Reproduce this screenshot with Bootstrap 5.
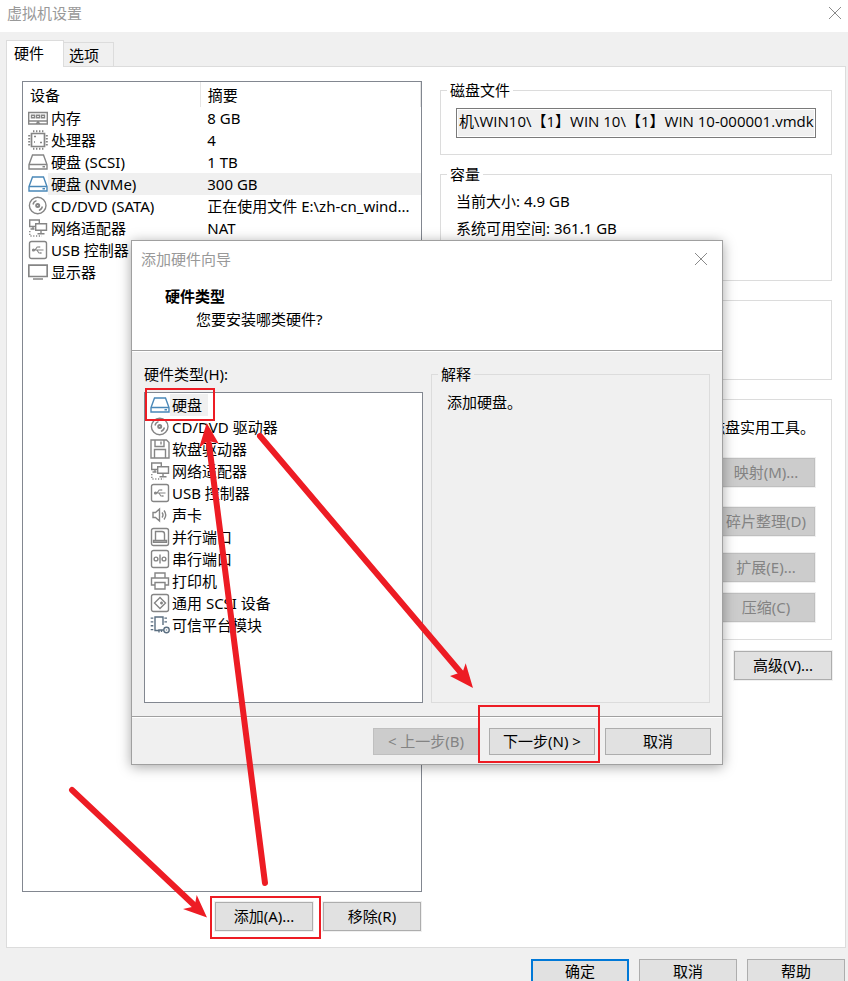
<!DOCTYPE html>
<html lang="zh-CN">
<head>
<meta charset="utf-8">
<meta name="viewport" content="width=device-width, initial-scale=1">
<title>虚拟机设置</title>
<link href="https://cdn.jsdelivr.net/npm/bootstrap@5.3.0/dist/css/bootstrap.min.css" rel="stylesheet">
<style>
body{font:15px/22px "Noto Sans","Noto Sans CJK SC",sans-serif;color:#000;background:#f0f0f0}
.titlebar{height:32px;padding:0 7px 6px;color:#999;background:#fff}
.close-x{border:0;background:none;padding:0;line-height:0;color:#8a8a8a}
.tabs{padding:8px 0 0 6px}
.tabs button{border:1px solid #dcdcdc;border-bottom:0;background:#f0f0f0;color:#000;padding:0 0 0 5px;height:24px;width:51px;line-height:22px;text-align:left}
.tabs button.active{background:#fff;height:27px;width:58px;margin-bottom:-1px;margin-right:-1px;padding:0 0 2px 7px;z-index:1}
.panel{background:#fff;border:1px solid #dcdcdc;margin:0 2px 0 6px;padding:14px 13px 16px 15px;display:grid;grid-template-columns:400fr 392fr;column-gap:18px}
.sunken{border:1px solid #828790;background:#fff}
.devices{width:100%;table-layout:fixed;line-height:22px}
.devices th{font-weight:400;height:25px;padding:0 0 0 7px;border-right:1px solid #e5e5e5}
.devices td{padding:0;white-space:nowrap;overflow:hidden;text-overflow:ellipsis}
.devices td + td{padding:0 4px 0 7px}
.devices td:first-child{padding-left:5px}
.devices .sel td + td,.devices .sel .nm{background:#f0f0f0}
.nm{padding-left:3px}
.ico{width:20px;height:20px;flex:none;fill:none;stroke:#858585;stroke-width:1.4}
.blue{stroke:#4a88b8}
.slate{stroke:#5a6e80}
.wbtn{width:98px;height:29px;padding:0 0 2px;font:inherit;line-height:20px;text-align:center;color:#000;background:#e1e1e1;border:1px solid #adadad;box-shadow:0 0 0 1px #f0f0f0;border-radius:0}
.wbtn:disabled{color:#838383;background:#ccc;border-color:#bfbfbf}
.wbtn.primary{border:2px solid #0078d7}
.list-actions{gap:10px;margin-top:10px;padding-right:1px}
fieldset.box{border:1px solid #dcdcdc;padding:0 15px}
fieldset.box legend{float:none;width:auto;margin:0 0 0 -9px;padding:0 3px;font-size:15px;line-height:18px}
.g-file{height:74px;margin-bottom:10px}
.g-cap{height:116px;margin-bottom:19px;line-height:27px}
.g-cap div:first-of-type{padding-top:5px}
.g-info{height:80px;margin-bottom:19px}
.g-tool{height:241px;margin-bottom:11px}
.path{width:100%;height:30px;margin-top:9px;padding:0 0 6px 2px;border:1px solid #7a7a7a;box-shadow:inset 0 0 0 1px #fff;background:#f0f0f0;border-radius:0;color:#000;font-family:"Open Sans","Noto Sans CJK SC",sans-serif}
.tool-note{padding:16px 1px 20px 0}
.tools{padding-right:1px}
.tools .wbtn{margin-bottom:20px}
.tools .wbtn:nth-child(2){margin-bottom:17px}
.tools .wbtn:nth-child(3){margin-bottom:11px}
.foot{flex:0 0 33px;min-height:0;padding:11px 3px 0 0;gap:10px}
.foot .wbtn{flex:none;line-height:16px;padding:0 0 5px}
.wizard{position:absolute;left:131px;top:240px;width:592px;border:1px solid #a0a0a0;background:#f0f0f0;box-shadow:0 2px 12px rgba(0,0,0,.35)}
.wiz-head{height:110px;background:#fff;border-bottom:1px solid #a0a0a0;padding:7px 15px 0 9px}
.wiz-head .cap{color:#999}
.wiz-head h1{font-size:15px;line-height:22px;font-weight:700;margin:15px 0 0 24px}
.wiz-head p{margin:1px 0 0 55px;line-height:22px}
.wiz-body{padding:13px 12px 13px 12px;border-top:1px solid #fff;display:grid;grid-template-columns:1fr 1fr;column-gap:8px}
.kinds-label{line-height:18px;margin-bottom:9px}
.kinds{height:311px;padding-top:1px}
.kinds button{display:flex;align-items:center;width:100%;height:22px;padding:0 0 0 5px;border:0;background:none;color:#000;text-align:left}
.kinds span{padding:0 6px 0 2px;line-height:22px}
.kinds .sel span{background:#f0f0f0}
.wiz-foot{border-top:1px solid #a0a0a0;box-shadow:inset 0 1px #fff;padding:11px 11px 9px;gap:10px}
.wiz-foot .wbtn{width:106px;height:27px}
.marks{position:absolute;left:0;top:0;width:848px;height:981px;pointer-events:none;fill:none;stroke:#ed1c24}
</style>
</head>
<body>
<svg class="d-none" aria-hidden="true">
<symbol id="i-disk" viewBox="0 0 20 20"><path d="M4.500 3h11L19 12.500V17H1v-4.500zM1 12.500h18M14.500 14.800h2.500"/></symbol>
<symbol id="i-mem" viewBox="0 0 20 20"><path d="M.7 4.500h18.600v11.500H.7zM1 13h18M3.500 7.200h3v2.600h-3zM8.500 7.200h3v2.600h-3zM13.500 7.200h3v2.600h-3zM8 16l2-2 2 2"/></symbol>
<symbol id="i-cpu" viewBox="0 0 20 20"><path d="M3.500 3.500h13v13h-13z" stroke-width="1.700"/><path d="M5 1.200h11M5 18.800h11M1.200 5v11M18.800 5v11" stroke-width="2" stroke-dasharray="1.400 1.600"/><path d="M6 6.500h2M12 12.500h2M6 12h1" stroke-width="1.600"/></symbol>
<symbol id="i-cd" viewBox="0 0 20 20"><circle cx="9.700" cy="9.500" r="8.300"/><circle cx="9.700" cy="9.500" r="1.500" stroke-width="2"/><path d="M5 8.500a5 5 0 0 1 3.500-3.800M14.400 10.500a5 5 0 0 1-3.500 3.800"/></symbol>
<symbol id="i-net" viewBox="0 0 20 20"><path d="M7 8.500H1.700V2h9.600v3M7.700 5.700h10.800v6.600H7.700zM13 12.500v3M9.500 15.700h7M5 9v2M2.500 11h4"/><path d="M1.800 13v5h12" stroke-dasharray="1.200 1.600"/></symbol>
<symbol id="i-usb" viewBox="0 0 20 20"><rect x="1.500" y="1.500" width="17" height="17" rx="2"/><path d="M5 10h10.500M7 10l2.200-3h2.300M8.800 10l2.200 3h2" stroke-width="1.100"/><circle cx="5.500" cy="10" r=".9"/><path d="M11.500 6.500v1M13 12.500v1" stroke-width="1.600"/></symbol>
<symbol id="i-mon" viewBox="0 0 20 20"><path d="M.8 3.200h18.400v11.300H.8zM5 17h10" stroke-width="1.700"/></symbol>
<symbol id="i-floppy" viewBox="0 0 20 20"><path d="M1 1h15.500L19 3.500V19H1zM5 1v6.500h9V1M11 2.500v3M4.500 19v-8.500h11V19"/></symbol>
<symbol id="i-snd" viewBox="0 0 20 20"><path d="M3 7.500h2.500l4-3.500v12l-4-3.500H3zM12 7.500q2 2.500 0 5M14 5.500q3.500 4.500 0 9"/></symbol>
<symbol id="i-par" viewBox="0 0 20 20"><rect x="1.500" y="1.500" width="17" height="17" rx="2"/><path d="M5.500 13.500V4.500H12q2.500 0 2.500 2.500v6.500M3.500 15.200v-1.700h13v1.700z"/></symbol>
<symbol id="i-ser" viewBox="0 0 20 20"><rect x="1.500" y="1.500" width="17" height="17" rx="2"/><circle cx="6" cy="10" r="1.900"/><circle cx="14" cy="10" r="1.900"/><path d="M10 5.500v9"/></symbol>
<symbol id="i-prn" viewBox="0 0 20 20"><path d="M5 7V2h10v5M5 14H1.500V7h17v7H15M5 11.500h10V18H5z"/></symbol>
<symbol id="i-scsi" viewBox="0 0 20 20"><rect x="1.500" y="1.500" width="17" height="17" rx="2"/><path d="M10 4.500 15.500 10 10 15.500 4.500 10zM10 10h3M11.500 8.500v3"/></symbol>
<symbol id="i-tpm" viewBox="0 0 20 20"><path d="M13 10V2H5v13.500h4"/><path d="M2 2.500v13.500M15.700 2.500V10" stroke-width="2.600" stroke-dasharray="1.300 2.500"/><circle cx="16.500" cy="15" r="2.700"/><path d="M13.800 15H9v2.500M11.500 15v2M16.500 14.500v1"/></symbol>
</svg>

<div class="vh-100 d-flex flex-column overflow-hidden">
  <header class="titlebar d-flex align-items-center justify-content-between">
    <span>虚拟机设置</span>
    <button class="close-x" aria-label="关闭"><svg width="12" height="12" stroke="currentColor"><path d="M0 0l12 12M12 0L0 12"/></svg></button>
  </header>
  <div class="tabs d-flex align-items-end" role="tablist">
    <button class="active position-relative" role="tab" aria-selected="true">硬件</button>
    <button role="tab" aria-selected="false">选项</button>
  </div>
  <main class="panel flex-grow-1">
    <div class="d-flex flex-column">
      <div class="sunken flex-grow-1">
        <table class="devices">
          <colgroup><col style="width:44.6%"><col></colgroup>
          <thead><tr><th>设备</th><th>摘要</th></tr></thead>
          <tbody>
            <tr><td><div class="d-flex align-items-center"><svg class="ico"><use href="#i-mem"/></svg><span class="nm flex-grow-1">内存</span></div></td><td>8 GB</td></tr>
            <tr><td><div class="d-flex align-items-center"><svg class="ico"><use href="#i-cpu"/></svg><span class="nm flex-grow-1">处理器</span></div></td><td>4</td></tr>
            <tr><td><div class="d-flex align-items-center"><svg class="ico"><use href="#i-disk"/></svg><span class="nm flex-grow-1">硬盘 (SCSI)</span></div></td><td>1 TB</td></tr>
            <tr class="sel"><td><div class="d-flex align-items-center"><svg class="ico blue"><use href="#i-disk"/></svg><span class="nm flex-grow-1">硬盘 (NVMe)</span></div></td><td>300 GB</td></tr>
            <tr><td><div class="d-flex align-items-center"><svg class="ico"><use href="#i-cd"/></svg><span class="nm flex-grow-1">CD/DVD (SATA)</span></div></td><td>正在使用文件 E:\zh-cn_wind...</td></tr>
            <tr><td><div class="d-flex align-items-center"><svg class="ico"><use href="#i-net"/></svg><span class="nm flex-grow-1">网络适配器</span></div></td><td>NAT</td></tr>
            <tr><td><div class="d-flex align-items-center"><svg class="ico"><use href="#i-usb"/></svg><span class="nm flex-grow-1">USB 控制器</span></div></td><td></td></tr>
            <tr><td><div class="d-flex align-items-center"><svg class="ico"><use href="#i-mon"/></svg><span class="nm flex-grow-1">显示器</span></div></td><td></td></tr>
          </tbody>
        </table>
      </div>
      <div class="list-actions d-flex justify-content-end">
        <button class="wbtn">添加(A)...</button>
        <button class="wbtn">移除(R)</button>
      </div>
    </div>
    <div>
      <fieldset class="box g-file"><legend>磁盘文件</legend>
        <input class="path" aria-label="磁盘文件" readonly value="机\WIN10\【1】WIN 10\【1】WIN 10-000001.vmdk">
      </fieldset>
      <fieldset class="box g-cap"><legend>容量</legend>
        <div>当前大小: 4.9 GB</div>
        <div>系统可用空间: 361.1 GB</div>
      </fieldset>
      <fieldset class="box g-info"></fieldset>
      <fieldset class="box g-tool text-end">
        <div class="tool-note">磁盘实用工具。</div>
        <div class="tools d-flex flex-column align-items-end">
          <button class="wbtn" disabled>映射(M)...</button>
          <button class="wbtn" disabled>碎片整理(D)</button>
          <button class="wbtn" disabled>扩展(E)...</button>
          <button class="wbtn" disabled>压缩(C)</button>
        </div>
      </fieldset>
      <div class="text-end pe-0 tools"><button class="wbtn">高级(V)...</button></div>
    </div>
  </main>
  <footer class="foot d-flex justify-content-end align-items-start">
    <button class="wbtn primary">确定</button>
    <button class="wbtn">取消</button>
    <button class="wbtn">帮助</button>
  </footer>
</div>

<section class="wizard" role="dialog" aria-label="添加硬件向导">
  <div class="wiz-head">
    <div class="d-flex justify-content-between align-items-center">
      <span class="cap">添加硬件向导</span>
      <button class="close-x" aria-label="关闭"><svg width="12" height="12" stroke="currentColor"><path d="M0 0l12 12M12 0L0 12"/></svg></button>
    </div>
    <h1>硬件类型</h1>
    <p>您要安装哪类硬件?</p>
  </div>
  <div class="wiz-body">
    <div>
      <div class="kinds-label">硬件类型(H):</div>
      <div class="sunken kinds">
        <button class="sel"><svg class="ico blue"><use href="#i-disk"/></svg><span>硬盘</span></button>
        <button><svg class="ico"><use href="#i-cd"/></svg><span>CD/DVD 驱动器</span></button>
        <button><svg class="ico"><use href="#i-floppy"/></svg><span>软盘驱动器</span></button>
        <button><svg class="ico"><use href="#i-net"/></svg><span>网络适配器</span></button>
        <button><svg class="ico"><use href="#i-usb"/></svg><span>USB 控制器</span></button>
        <button><svg class="ico"><use href="#i-snd"/></svg><span>声卡</span></button>
        <button><svg class="ico"><use href="#i-par"/></svg><span>并行端口</span></button>
        <button><svg class="ico"><use href="#i-ser"/></svg><span>串行端口</span></button>
        <button><svg class="ico"><use href="#i-prn"/></svg><span>打印机</span></button>
        <button><svg class="ico"><use href="#i-scsi"/></svg><span>通用 SCSI 设备</span></button>
        <button><svg class="ico slate"><use href="#i-tpm"/></svg><span>可信平台模块</span></button>
      </div>
    </div>
    <fieldset class="box"><legend>解释</legend><div class="pt-2">添加硬盘。</div></fieldset>
  </div>
  <div class="wiz-foot d-flex justify-content-end">
    <button class="wbtn" disabled>&lt; 上一步(B)</button>
    <button class="wbtn">下一步(N) &gt;</button>
    <button class="wbtn">取消</button>
  </div>
</section>

<svg class="marks" viewBox="0 0 848 981" aria-hidden="true">
  <g stroke-width="2"><path d="M146 389h68v31h-68zM479 706h120v56H479zM211 897h109v41H211z"/></g>
  <g stroke-width="6" stroke-linecap="round"><path d="M72 790 194 905M265 883 209 444M260 436 462 674"/></g>
  <g fill="#ed1c24" stroke="none"><path d="M207 917.500 183 909l9-2 3-3 1.700-9zM206.700 423l12 20.500-8-2-5 1-6.700 5.500zM473 688l-23-12 9-3 4-2 2.700-7.700z"/></g>
</svg>
<script src="https://cdn.jsdelivr.net/npm/bootstrap@5.3.0/dist/js/bootstrap.bundle.min.js"></script>
</body>
</html>
